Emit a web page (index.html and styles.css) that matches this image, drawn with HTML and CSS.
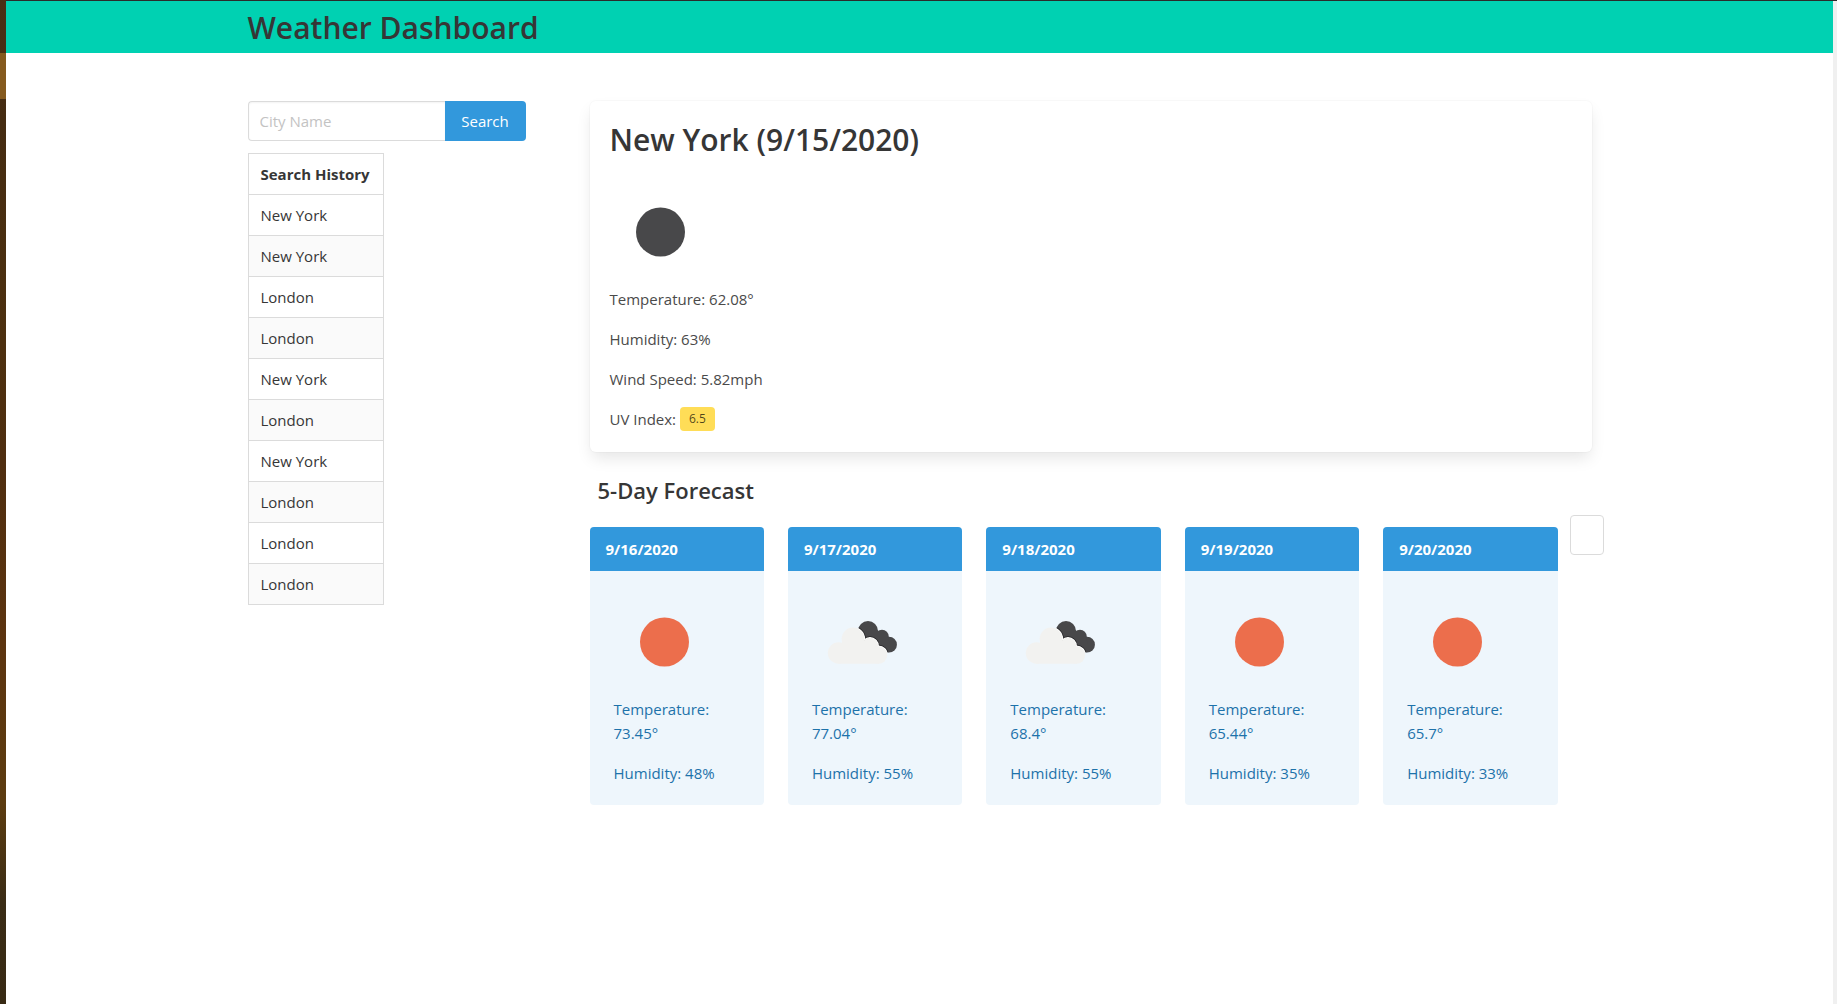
FILE: index.html
```html
<!DOCTYPE html>
<html lang="en">
<head>
<meta charset="utf-8">
<meta name="viewport" content="width=device-width, initial-scale=1">
<title>Weather Dashboard</title>
<link rel="stylesheet" href="styles.css">
</head>
<body>
<svg class="sprite" aria-hidden="true">
  <defs>
    <clipPath id="dark-clip">
      <path d="M46 44L46 29H86V61H74Z"/>
    </clipPath>
    <g id="front-cloud">
      <circle cx="26.5" cy="61" r="10.7"/>
      <circle cx="41" cy="47" r="11.4"/>
      <circle cx="58" cy="54" r="8.2"/>
      <circle cx="66.500" cy="63" r="8.700"/>
      <path d="M30 50H58L67 58V71.700H26.500Z"/>
    </g>
    <g id="back-cloud">
      <circle cx="56" cy="39" r="10"/>
      <circle cx="70" cy="44.500" r="6.800"/>
      <circle cx="77" cy="52.700" r="7.900"/>
      <path d="M50 42L60 32L65 38L75 43L78 52L74 60H60Z"/>
    </g>
    <clipPath id="back-clip">
      <circle cx="56" cy="39" r="10"/>
      <circle cx="70" cy="44.500" r="6.800"/>
      <circle cx="77" cy="52.700" r="7.900"/>
      <path d="M50 42L60 32L65 38L75 43L78 52L74 60H60Z"/>
    </clipPath>
    <symbol id="clear-day" viewBox="0 0 100 100"><circle cx="50.500" cy="50" r="24.500" fill="#ec6e4c"/></symbol>
    <symbol id="clear-night" viewBox="0 0 100 100"><circle cx="50.500" cy="50" r="24.500" fill="#48484a"/></symbol>
    <symbol id="clouds" viewBox="0 0 100 100">
      <use href="#back-cloud" fill="#48484a"/>
      <g clip-path="url(#back-clip)">
        <use href="#front-cloud" fill="#222224" stroke="#222224" stroke-width="3"/>
      </g>
      <g clip-path="url(#dark-clip)">
        <use href="#front-cloud" fill="#fff" stroke="#fff" stroke-width="1.500"/>
      </g>
      <use href="#front-cloud" fill="#f2f2f0"/>
    </symbol>
  </defs>
</svg>
<div class="frame">
  <div class="backdrop"></div>
  <div class="page">
    <header class="banner">
      <div class="container"><h1 class="title">Weather Dashboard</h1></div>
    </header>
    <main class="container layout">
      <aside>
        <form class="search">
          <input class="input search-input" type="text" placeholder="City Name" aria-label="City Name">
          <button class="search-button" type="button">Search</button>
        </form>
        <table class="history">
          <thead><tr><th scope="col">Search History</th></tr></thead>
          <tbody>
            <tr><td>New York</td></tr>
            <tr><td>New York</td></tr>
            <tr><td>London</td></tr>
            <tr><td>London</td></tr>
            <tr><td>New York</td></tr>
            <tr><td>London</td></tr>
            <tr><td>New York</td></tr>
            <tr><td>London</td></tr>
            <tr><td>London</td></tr>
            <tr><td>London</td></tr>
          </tbody>
        </table>
      </aside>
      <section>
        <article class="current">
          <h2 class="title city">New York (9/15/2020)</h2>
          <svg class="icon" role="img" aria-label="Clear night"><use href="#clear-night"/></svg>
          <p>Temperature: 62.08°</p>
          <p>Humidity: 63%</p>
          <p>Wind Speed: 5.82mph</p>
          <p>UV Index: <span class="tag">6.5</span></p>
        </article>
        <h2 class="subtitle">5-Day Forecast</h2>
        <div class="forecast">
          <article class="day">
            <h3 class="day-header">9/16/2020</h3>
            <div class="day-body">
              <svg class="icon" role="img" aria-label="Clear"><use href="#clear-day"/></svg>
              <p>Temperature: 73.45°</p>
              <p>Humidity: 48%</p>
            </div>
          </article>
          <article class="day">
            <h3 class="day-header">9/17/2020</h3>
            <div class="day-body">
              <svg class="icon" role="img" aria-label="Clouds"><use href="#clouds"/></svg>
              <p>Temperature: 77.04°</p>
              <p>Humidity: 55%</p>
            </div>
          </article>
          <article class="day">
            <h3 class="day-header">9/18/2020</h3>
            <div class="day-body">
              <svg class="icon" role="img" aria-label="Clouds"><use href="#clouds"/></svg>
              <p>Temperature: 68.4°</p>
              <p>Humidity: 55%</p>
            </div>
          </article>
          <article class="day">
            <h3 class="day-header">9/19/2020</h3>
            <div class="day-body">
              <svg class="icon" role="img" aria-label="Clear"><use href="#clear-day"/></svg>
              <p>Temperature: 65.44°</p>
              <p>Humidity: 35%</p>
            </div>
          </article>
          <article class="day">
            <h3 class="day-header">9/20/2020</h3>
            <div class="day-body">
              <svg class="icon" role="img" aria-label="Clear"><use href="#clear-day"/></svg>
              <p>Temperature: 65.7°</p>
              <p>Humidity: 33%</p>
            </div>
          </article>
          <button class="blank-button" type="button" aria-label="More"></button>
        </div>
      </section>
    </main>
  </div>
  <div class="gutter"></div>
</div>
</body>
</html>
```
FILE: styles.css
```css
* { box-sizing: border-box; }

body, h1, h2, h3, p { margin: 0; }

body {
  color: #4a4a4a;
  font: 15px/24px "Open Sans", "Noto Sans", sans-serif;
}

button, input { font: inherit; }

.sprite { position: absolute; width: 0; height: 0; }

.frame {
  display: grid;
  grid-template-columns: 6px minmax(0, 1fr) 4px;
  min-height: 100vh;
}

.backdrop {
  background:
    linear-gradient(#855a1e, #855a1e) 0 53px / 100% 46px no-repeat,
    linear-gradient(#4a3015, #452c12 12%, #4d300f 34%, #4f2e10 46%, #5c340f 64%, #5c3c10 80%, #3a2c16 90%, #382a14);
}

.page { border-top: 1px solid #2b2b2b; background: #fff; }

.gutter { border-top: 1px solid #2b2b2b; background: #f0f0f0; }

.container { max-width: 1344px; margin: 0 auto; }

.banner { padding: 9px 0 7px; background: #00d1b2; }

.title {
  color: #363636;
  font-size: 30px;
  font-weight: 600;
  line-height: 36px;
}

.layout {
  display: grid;
  grid-template-columns: 318px minmax(0, 1fr);
  gap: 24px;
  padding: 48px 0;
}

.search { display: flex; margin-bottom: 12px; }

.input {
  min-width: 0;
  height: 40px;
  padding: 0 11px;
  border: 1px solid #dbdbdb;
  border-radius: 4px;
  background: #fff;
  color: #363636;
}

.search-input {
  width: 197px;
  border-radius: 4px 0 0 4px;
  border-right: 0;
  box-shadow: inset 0 1px 2px rgba(10, 10, 10, 0.05);
}

.input::placeholder { color: #c3c3c3; }

.search-button {
  width: 81px;
  height: 40px;
  padding: 0;
  border: 0;
  border-radius: 0 4px 4px 0;
  background: #3298dc;
  color: #fff;
}

.history { min-width: 136px; border-collapse: collapse; color: #363636; }

.history th, .history td {
  padding: 8px 12px;
  border: 1px solid #dbdbdb;
  text-align: left;
}

.history tbody tr:nth-child(even) { background: #fafafa; }

.current {
  padding: 21px 20px;
  border-radius: 6px;
  background: #fff;
  box-shadow: 0 8px 16px -2px rgba(10, 10, 10, 0.1), 0 0 0 1px rgba(10, 10, 10, 0.02);
}

.city { margin-bottom: 24px; }

.icon { display: block; width: 100px; height: 100px; margin: 1px 0 5px; }

p + p { margin-top: 16px; }

.tag {
  display: inline-block;
  padding: 0 9px;
  border-radius: 4px;
  background: #ffdd57;
  color: rgba(0, 0, 0, 0.7);
  font-size: 12px;
  vertical-align: top;
}

.subtitle {
  margin: 24px 8px 11px;
  color: #363636;
  font-size: 22px;
  font-weight: 600;
  line-height: 28px;
}

.forecast {
  display: flex;
  align-items: flex-start;
  margin: 0 -12px;
}

.day { flex: 1; margin: 12px; border-radius: 4px; background: #eef6fc; color: #1d72aa; overflow: hidden; }

.day-header {
  padding: 10px 16px;
  background: #3298dc;
  color: #fff;
  font-size: 15px;
  font-weight: 700;
}

.day-body { padding: 20px 24px; }

.blank-button {
  width: 34px;
  height: 40px;
  border: 1px solid #dbdbdb;
  border-radius: 4px;
  background: #fff;
}
```
